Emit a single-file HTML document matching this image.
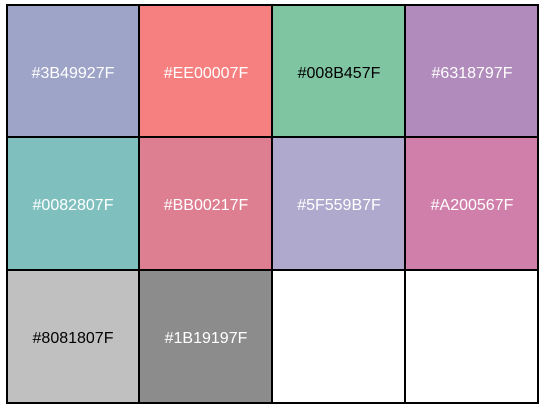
<!DOCTYPE html><html><head><style>
body{margin:0;width:545px;height:408px;background:#fff;position:relative;font-family:"Liberation Sans",sans-serif;overflow:hidden}
.c{position:absolute;box-sizing:border-box;display:flex;align-items:center;justify-content:center;font-size:16px;color:#fff;padding-top:4px}
.v{position:absolute;background:#000;width:2px;top:4px;height:400px}
.h{position:absolute;background:#000;height:2px;left:6px;width:533px}
</style></head><body>
<div class="c" style="left:7px;top:6px;width:132px;height:131px;background:rgba(59,73,146,.5)">#3B49927F</div>
<div class="c" style="left:140px;top:6px;width:132px;height:131px;background:rgba(238,0,0,.5)">#EE00007F</div>
<div class="c" style="left:273px;top:6px;width:132px;height:131px;background:rgba(0,139,69,.5);color:#000">#008B457F</div>
<div class="c" style="left:406px;top:6px;width:132px;height:131px;background:rgba(99,24,121,.5)">#6318797F</div>
<div class="c" style="left:7px;top:138px;width:132px;height:132px;background:rgba(0,130,128,.5)">#0082807F</div>
<div class="c" style="left:140px;top:138px;width:132px;height:132px;background:rgba(187,0,33,.5)">#BB00217F</div>
<div class="c" style="left:273px;top:138px;width:132px;height:132px;background:rgba(95,85,155,.5)">#5F559B7F</div>
<div class="c" style="left:406px;top:138px;width:132px;height:132px;background:rgba(162,0,86,.5)">#A200567F</div>
<div class="c" style="left:7px;top:271px;width:132px;height:132px;background:rgba(128,129,128,.5);color:#000">#8081807F</div>
<div class="c" style="left:140px;top:271px;width:132px;height:132px;background:rgba(27,25,25,.5)">#1B19197F</div>
<div class="v" style="left:6px"></div><div class="v" style="left:138px"></div><div class="v" style="left:271px"></div><div class="v" style="left:404px"></div><div class="v" style="left:537px"></div>
<div class="h" style="top:4px"></div><div class="h" style="top:136px"></div><div class="h" style="top:269px"></div><div class="h" style="top:402px"></div>
</body></html>
